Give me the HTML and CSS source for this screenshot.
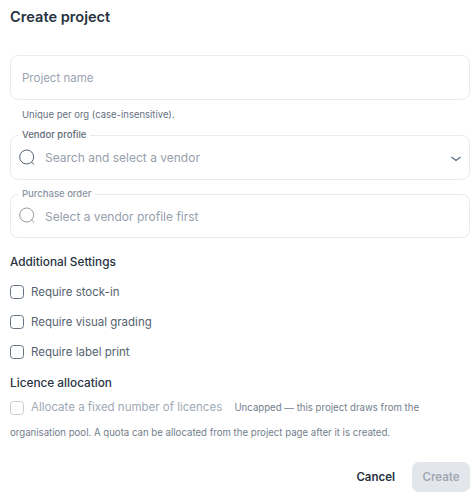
FILE: index.html
```html
<!DOCTYPE html>
<html lang="en">
<head>
  <meta charset="UTF-8">
  <title>Create project</title>
  <link rel="stylesheet" href="styles.css">
</head>
<body>
  <div class="dialog">
    <h2 class="dialog-title">Create project</h2>

    <div class="field field-name">
      <input class="field-input" type="text" placeholder="Project name">
    </div>
    <p class="helper">Unique per org (case-insensitive).</p>

    <div class="field field-vendor">
      <span class="field-label">Vendor profile</span>
      <svg class="search-icon" width="18" height="18" viewBox="0 0 18 18" fill="none" stroke="#56626f" stroke-width="1"><circle cx="7.7" cy="8" r="7"/><path d="M12.6 13l2.4 2.6"/></svg>
      <span class="field-text">Search and select a vendor</span>
      <svg class="chevron" width="12" height="8" viewBox="0 0 12 8" fill="none" stroke="#56657a" stroke-width="1.1"><path d="M1.5 2l4.5 3.5 4.5-3.5"/></svg>
    </div>

    <div class="field field-po">
      <span class="field-label label-muted">Purchase order</span>
      <svg class="search-icon icon-muted" width="18" height="18" viewBox="0 0 18 18" fill="none" stroke="#56626f" stroke-width="1"><circle cx="7.7" cy="8" r="7"/><path d="M12.6 13l2.4 2.6"/></svg>
      <span class="field-text">Select a vendor profile first</span>
    </div>

    <h3 class="section-title settings-title">Additional Settings</h3>
    <label class="check-row"><span class="box"></span>Require stock-in</label>
    <label class="check-row"><span class="box"></span>Require visual grading</label>
    <label class="check-row"><span class="box"></span>Require label print</label>

    <h3 class="section-title licence-title">Licence allocation</h3>
    <p class="licence">
      <label class="check-inline"><span class="box box-off"></span>Allocate a fixed number of licences</label>
      <span class="licence-note">Uncapped — this project draws from the organisation pool. A quota can be allocated from the project page after it is created.</span>
    </p>

    <div class="actions">
      <button class="btn-cancel">Cancel</button>
      <button class="btn-create" disabled>Create</button>
    </div>
  </div>
</body>
</html>
```

FILE: styles.css
```css
* {
  box-sizing: border-box;
}
body {
  margin: 0;
  background: #fff;
  font-family: Inter, "Liberation Sans", sans-serif;
  color: #1c2733;
}
.dialog {
  padding: 8px 5px 0 10px;
}
.dialog-title {
  margin: 0;
  font-size: 14.6px;
  line-height: 18px;
  font-weight: 600;
  color: #27323f;
}
.field {
  position: relative;
  display: flex;
  align-items: center;
  height: 45px;
  border: 1px solid #e8eaed;
  border-radius: 8px;
  padding-left: 11px;
}
.field-name {
  margin-top: 29px;
}
.field-input {
  flex: 1;
  border: none;
  outline: none;
  padding: 0;
  font-family: inherit;
  font-size: 11.5px;
  background: transparent;
}
.field-input::placeholder {
  color: #9aa4b1;
}
.helper {
  margin: 9px 0 0 12px;
  font-size: 9.5px;
  line-height: 12px;
  color: #66717f;
}
.field-vendor {
  margin-top: 14px;
}
.field-po {
  margin-top: 14px;
  height: 44px;
}
.field-label {
  position: absolute;
  left: 7px;
  top: -7px;
  padding: 0 4px;
  background: #fff;
  font-size: 9.5px;
  line-height: 12px;
  font-weight: 500;
  color: #5f6b7a;
}
.label-muted {
  color: #8a94a1;
}
.search-icon {
  flex: none;
  margin-left: -3px;
}
.icon-muted {
  opacity: 0.65;
}
.field-text {
  margin-left: 8px;
  font-size: 12px;
  color: #96a0ad;
}
.chevron {
  position: absolute;
  right: 7px;
  top: 19px;
}
.section-title {
  margin: 0;
  font-size: 11.8px;
  line-height: 14px;
  font-weight: 500;
  color: #27323f;
}
.settings-title {
  margin-top: 17px;
  margin-bottom: 8px;
}
.check-row {
  display: flex;
  align-items: center;
  height: 30px;
  font-size: 11.5px;
  color: #56626f;
}
.box {
  flex: none;
  width: 14px;
  height: 14px;
  margin-right: 7px;
  border: 1.5px solid #667280;
  border-radius: 3.5px;
}
.box-off {
  border-color: #c8cdd3;
}
.licence-title {
  margin-top: 9px;
}
.licence {
  margin: 5px 0 0;
  line-height: 25px;
  font-size: 11.5px;
}
.check-inline {
  display: inline-flex;
  align-items: center;
  vertical-align: top;
  height: 25px;
  margin-right: 9px;
  color: #a0a9b5;
}
.licence-note {
  font-size: 9.65px;
  color: #737e8b;
}
.actions {
  display: flex;
  justify-content: flex-end;
  align-items: center;
  gap: 17px;
  margin-top: 17px;
}
.btn-cancel,
.btn-create {
  border: none;
  font-family: inherit;
  font-size: 11.5px;
  font-weight: 600;
  height: 30px;
  background: none;
  padding: 0;
}
.btn-cancel {
  color: #27323f;
}
.btn-create {
  width: 58px;
  border-radius: 7px;
  background: #e3e6ea;
  color: #a0a8b3;
}
```
